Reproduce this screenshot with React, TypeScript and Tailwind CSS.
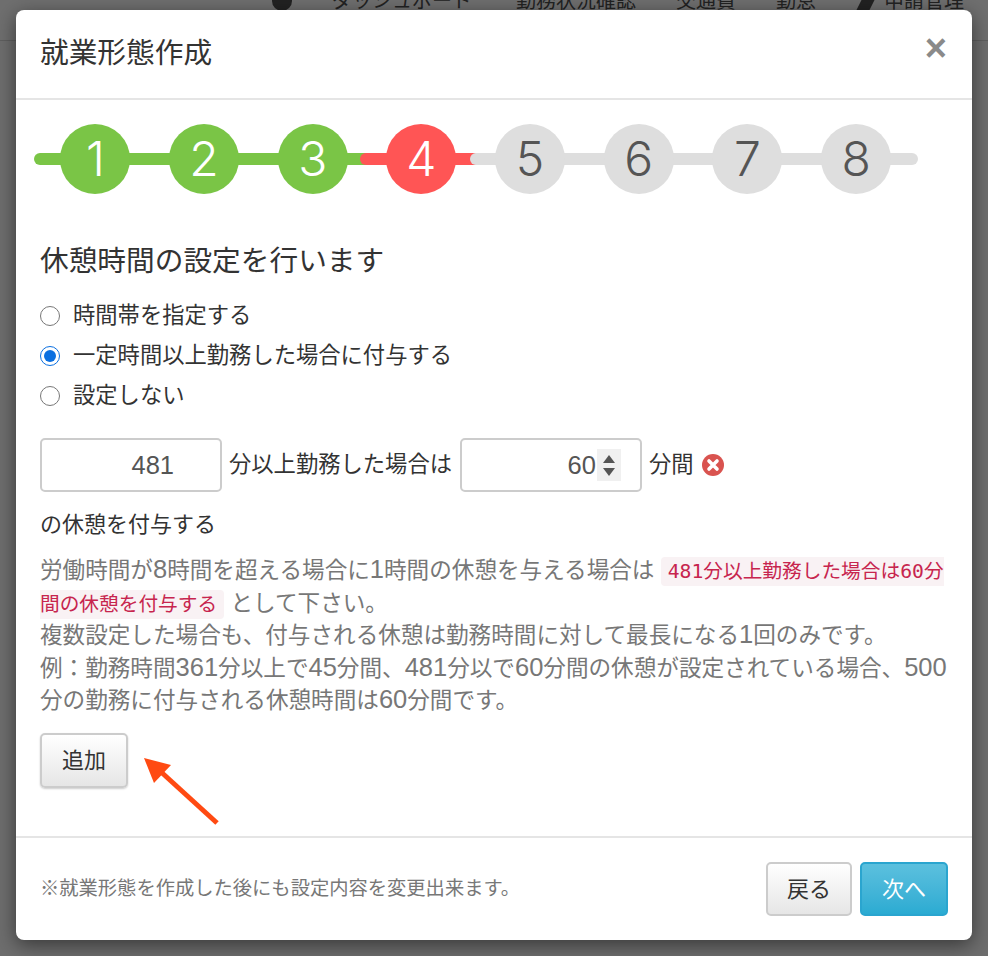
import React from "react";

const font = { fontFamily: '"Liberation Sans", "Noto Sans CJK JP", sans-serif' };

const steps = [
  { n: 1, c: "bg-[#7ac546] text-white" },
  { n: 2, c: "bg-[#7ac546] text-white" },
  { n: 3, c: "bg-[#7ac546] text-white" },
  { n: 4, c: "bg-[#ff5555] text-white" },
  { n: 5, c: "bg-[#dedede] text-[#555]" },
  { n: 6, c: "bg-[#dedede] text-[#555]" },
  { n: 7, c: "bg-[#dedede] text-[#555]" },
  { n: 8, c: "bg-[#dedede] text-[#555]" },
];

function Num({ children }: { children: React.ReactNode }) {
  return <span className="text-[25.5px] leading-none">{children}</span>;
}

function Radio({ checked, label }: { checked?: boolean; label: string }) {
  return (
    <label className="flex items-center h-[40px] gap-[13px] text-[22.3px] text-[#333]">
      <span
        className={
          checked
            ? "w-[20px] h-[20px] rounded-full border border-[#0a6fe0] flex items-center justify-center bg-white"
            : "w-[20px] h-[20px] rounded-full border border-[#777] bg-white"
        }
      >
        {checked && <span className="w-[12px] h-[12px] rounded-full bg-[#0a6fe0]" />}
      </span>
      {label}
    </label>
  );
}

export default function App() {
  return (
    <div style={font} className="relative w-[988px] h-[956px] overflow-hidden bg-[#6e6e6e]">
      <div className="absolute left-0 right-0 top-0 h-[41px] border-b border-[#5f5f5f] bg-[#6f6f6f] text-[20px] text-[#222]">
        <div className="absolute left-[272px] top-[-14px] flex items-center whitespace-nowrap">
          <span className="w-[20px] h-[20px] rounded-full bg-[#222] mr-[40px]" />
          <span>ダッシュボード</span>
          <span className="ml-[44px]">勤務状況確認</span>
          <span className="ml-[40px]">交通費</span>
          <span className="ml-[40px]">勤怠</span>
          <svg className="ml-[38px] mr-[5px]" width="25" height="24" viewBox="0 0 25 24">
            <path d="M1 24 L12 2 L25 2 L14 24 Z" fill="#222" />
          </svg>
          <span>申請管理</span>
        </div>
      </div>

      <div className="relative ml-[16px] mt-[10px] w-[956px] h-[930px] bg-white rounded-[8px] shadow-[0_5px_20px_rgba(0,0,0,0.5)] flex flex-col">
        <div className="h-[90px] px-[24px] border-b-2 border-[#e5e5e5] flex items-start justify-between shrink-0">
          <h3 className="text-[28.7px] leading-[38px] mt-[24px] text-[#333]">就業形態作成</h3>
          <span className="text-[38px] leading-[38px] mt-[19px] mr-[1px] font-bold text-[#8a8a8a]">×</span>
        </div>

        <div className="flex-1 pl-[24px] pr-[24px] flex flex-col">
          <div className="relative w-[884px] h-[70px] mt-[24px] ml-[-6px] flex items-center pl-[7px]">
            <div className="absolute left-0 top-[29px] h-[12px] w-[340px] rounded-full bg-[#7ac546]" />
            <div className="absolute left-[326px] top-[29px] h-[12px] w-[120px] rounded-full bg-[#ff5555]" />
            <div className="absolute left-[436px] top-[29px] h-[12px] w-[448px] rounded-full bg-[#dedede]" />
            {steps.map((s) => (
              <div key={s.n} className="relative w-[108.7px] flex justify-center shrink-0">
                <div className={`w-[70px] h-[70px] rounded-full flex items-center justify-center text-[48px] ${s.c}`} style={{ fontFamily: 'Inter, sans-serif', fontWeight: 300 }}>
                  {s.n}
                </div>
              </div>
            ))}
          </div>

          <h4 className="text-[28.7px] leading-[38px] mt-[48px] text-[#333]">休憩時間の設定を行います</h4>

          <div className="mt-[16px] flex flex-col">
            <Radio label="時間帯を指定する" />
            <Radio checked label="一定時間以上勤務した場合に付与する" />
            <Radio label="設定しない" />
          </div>

          <div className="flex items-center mt-[22px] text-[22.3px] text-[#333]">
            <div className="w-[182px] h-[54px] rounded-[5px] border-2 border-[#ccc] flex items-center justify-end pr-[46px] text-[25.5px] text-[#555]">481</div>
            <span className="ml-[7px] mr-[8px]">分以上勤務した場合は</span>
            <div className="w-[182px] h-[54px] rounded-[5px] border-2 border-[#ccc] flex items-center justify-end pr-[20px] text-[25.5px] text-[#555]">
              60
              <span className="w-[24px] h-[32px] bg-[#f0f0f0] flex flex-col items-center justify-center gap-[5px] mr-[-1px] ml-[1px]">
                <span className="w-0 h-0 border-x-[6px] border-x-transparent border-b-[8px] border-b-[#555]" />
                <span className="w-0 h-0 border-x-[6px] border-x-transparent border-t-[8px] border-t-[#555]" />
              </span>
            </div>
            <span className="ml-[7px]">分間</span>
            <svg className="ml-[8px]" width="22" height="22" viewBox="0 0 22 22">
              <circle cx="11" cy="11" r="11" fill="#d9534f" />
              <path d="M7 7 L15 15 M15 7 L7 15" stroke="#fff" strokeWidth="3.6" strokeLinecap="round" />
            </svg>
          </div>

          <p className="mt-[19px] text-[22px] leading-[28px] text-[#333]">の休憩を付与する</p>

          <div className="mt-[16px] text-[22.6px] leading-[32.6px] text-[#777] w-[910px]">
            労働時間が<Num>8</Num>時間を超える場合に<Num>1</Num>時間の休憩を与える場合は{" "}
            <code className="bg-[#f9f2f4] text-[#c7254e] rounded-[4px] px-[7px] py-[3px] text-[19.7px] leading-none font-normal" style={{ fontFamily: '"DejaVu Sans Mono", "Noto Sans CJK JP", monospace' }}>
              481分以上勤務した場合は60分間の休憩を付与する
            </code>{" "}
            として下さい。
            <br />
            複数設定した場合も、付与される休憩は勤務時間に対して最長になる<Num>1</Num>回のみです。
            <br />
            例：勤務時間<Num>361</Num>分以上で<Num>45</Num>分間、<Num>481</Num>分以で<Num>60</Num>分間の休憩が設定されている場合、<Num>500</Num>分の勤務に付与される休憩時間は<Num>60</Num>分間です。
          </div>

          <button className="mt-[15px] w-[88px] h-[55px] rounded-[5px] border-2 border-[#ccc] bg-gradient-to-b from-white to-[#e6e6e6] text-[22px] text-[#333] shadow-[0_1px_2px_rgba(0,0,0,0.2)]">
            追加
          </button>
        </div>

        <svg className="absolute left-[124px] top-[742px]" width="84" height="76" viewBox="0 0 84 76">
          <path d="M77 71 L20 19" stroke="#ff4a12" strokeWidth="5" />
          <path d="M4 6 L31 13 L14 31 Z" fill="#ff4a12" />
        </svg>

        <div className="h-[104px] border-t-2 border-[#e5e5e5] px-[24px] flex items-center justify-between shrink-0">
          <span className="text-[19.3px] text-[#777]">※就業形態を作成した後にも設定内容を変更出来ます。</span>
          <div className="flex gap-[8px]">
            <button className="w-[86px] h-[54px] rounded-[5px] border-2 border-[#ccc] bg-gradient-to-b from-white to-[#e6e6e6] text-[22px] text-[#333]">戻る</button>
            <button className="w-[88px] h-[54px] rounded-[5px] border-2 border-[#2aa5cf] bg-gradient-to-b from-[#5bc0de] to-[#2aabd2] text-[22px] text-white">次へ</button>
          </div>
        </div>
      </div>
    </div>
  );
}
